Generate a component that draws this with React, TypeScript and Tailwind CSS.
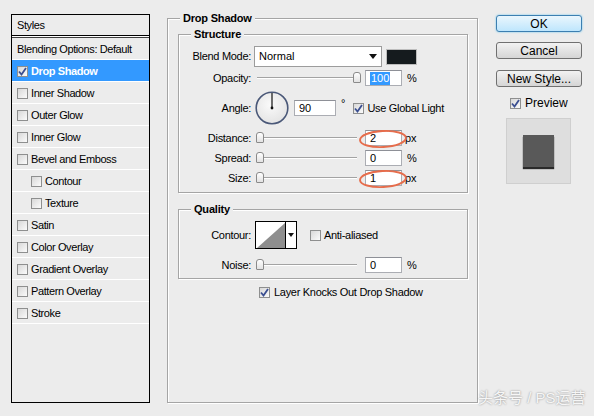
import React from 'react'

function Check({ checked = false }: { checked?: boolean }) {
  return (
    <span className="flex h-[11px] w-[11px] shrink-0 items-center justify-center border border-[#8e8f8f] bg-gradient-to-br from-[#d8d8d8] to-[#fbfbfb]">
      {checked && (
        <svg width="9" height="9" viewBox="0 0 9 9">
          <path d="M1 4.5 L3.5 7.5 L8 1" fill="none" stroke="#3b4f91" strokeWidth="1.8" />
        </svg>
      )}
    </span>
  )
}

function Slider({ thumb }: { thumb: string }) {
  return (
    <div className="relative ml-[3px] h-[12px] w-[104px] shrink-0">
      <div className="absolute left-[3px] right-[1px] top-[5px] h-[2px] border-t border-[#a3a3a3] border-b border-b-white" />
      <div
        className={`absolute top-0 h-[11px] w-[8px] rounded-t-[3px] rounded-b-[1px] border border-[#8a8a8a] bg-gradient-to-b from-white to-[#e2e2e2] ${thumb}`}
      />
    </div>
  )
}

function Field({ value, w = 'w-[37px]', ml = 'ml-[7px]', selected = false }: { value: string; w?: string; ml?: string; selected?: boolean }) {
  return (
    <div className={`flex h-[16px] shrink-0 items-center border border-[#abadb3] border-t-[#8e9097] bg-white pl-[4px] text-[11px] leading-none ${w} ${ml}`}>
      {selected ? <span className="bg-[#3399ff] px-[1px] py-[1px] text-white">{value}</span> : value}
    </div>
  )
}

function Label({ text }: { text: string }) {
  return <div className="w-[72px] shrink-0 text-right text-[11px] tracking-[-0.3px]">{text}</div>
}

function Group({ title, className, children }: { title: string; className: string; children: React.ReactNode }) {
  return (
    <div className={`relative shrink-0 border border-[#a5a5a5] shadow-[1px_1px_0_#fff,inset_1px_1px_0_#fff] ${className}`}>
      <div className="absolute left-[12px] top-[-8px] bg-[#ececec] px-[3px] text-[11px] font-bold leading-[14px] tracking-[-0.2px]">
        {title}
      </div>
      {children}
    </div>
  )
}

const styleRows: { label: string; indent?: boolean; active?: boolean; checked?: boolean; plain?: boolean }[] = [
  { label: 'Blending Options: Default', plain: true },
  { label: 'Drop Shadow', active: true, checked: true },
  { label: 'Inner Shadow' },
  { label: 'Outer Glow' },
  { label: 'Inner Glow' },
  { label: 'Bevel and Emboss' },
  { label: 'Contour', indent: true },
  { label: 'Texture', indent: true },
  { label: 'Satin' },
  { label: 'Color Overlay' },
  { label: 'Gradient Overlay' },
  { label: 'Pattern Overlay' },
  { label: 'Stroke' },
]

function Ellipse({ top }: { top: string }) {
  return (
    <svg className={`pointer-events-none absolute left-[179px] ${top}`} width="50" height="20" viewBox="0 0 50 20">
      <ellipse cx="25" cy="10" rx="23" ry="8" fill="none" stroke="#e66d4c" strokeWidth="1.9" transform="rotate(-3 25 10)" />
      <path d="M4 7 Q10 2 30 2" fill="none" stroke="#e66d4c" strokeWidth="1.2" />
    </svg>
  )
}

export default function App() {
  return (
    <div className="relative flex h-[416px] w-[594px] overflow-hidden bg-[#ececec] font-['Liberation_Sans','Noto_Sans_CJK_SC',sans-serif] text-black">
      {/* styles list */}
      <div className="ml-[11px] mt-[14px] flex h-[389px] w-[139px] shrink-0 flex-col border border-black">
        <div className="flex h-[21px] items-center border-b border-black pl-[5px] text-[11px] tracking-[-0.4px]">Styles</div>
        <div className="h-[1px] bg-white" />
        <div className="h-[1px] bg-[#404040]" />
        {styleRows.map((r) => (
          <div
            key={r.label}
            className={`flex h-[22px] items-center border-b border-white pt-[1px] text-[11px] tracking-[-0.4px] ${r.indent ? 'pl-[19px]' : 'pl-[5px]'} ${
              r.active ? 'bg-[#3399ff] font-bold text-white' : ''
            }`}
          >
            {!r.plain && <Check checked={r.checked} />}
            <span className={r.plain ? '' : 'ml-[3px]'}>{r.label}</span>
          </div>
        ))}
      </div>

      {/* settings */}
      <Group title="Drop Shadow" className="ml-[17px] mt-[18px] h-[385px] w-[311px]">
        <div className="flex flex-col pl-[10px] pt-[15px]">
          <Group title="Structure" className="h-[159px] w-[290px]">
            <div className="flex flex-col pt-[11px]">
              <div className="flex h-[21px] items-center">
                <Label text="Blend Mode:" />
                <div className="ml-[3px] flex h-[21px] w-[128px] items-center justify-between border border-[#9c9c9c] bg-white pl-[4px] pr-[4px] text-[11px]">
                  <span>Normal</span>
                  <svg width="8" height="5" viewBox="0 0 8 5">
                    <path d="M0 0 H8 L4 5 Z" fill="#111" />
                  </svg>
                </div>
                <div className="ml-[4px] h-[16px] w-[31px] border border-[#bdbdbd] bg-[#151b1e]" />
              </div>
              <div className="mt-[3px] flex h-[16px] items-center">
                <Label text="Opacity:" />
                <Slider thumb="left-[99px]" />
                <Field value="100" selected />
                <span className="ml-[5px] text-[11px]">%</span>
              </div>
              <div className="mt-[5px] flex h-[34px] items-center">
                <Label text="Angle:" />
                <svg className="ml-[4px] shrink-0" width="34" height="34" viewBox="0 0 34 34">
                  <defs>
                    <radialGradient id="dial" cx="0.45" cy="0.4" r="0.6">
                      <stop offset="0" stopColor="#fafafa" />
                      <stop offset="1" stopColor="#e4e4e4" />
                    </radialGradient>
                  </defs>
                  <circle cx="17" cy="17" r="15.8" fill="url(#dial)" stroke="#4a5878" strokeWidth="1.6" />
                  <line x1="17" y1="17" x2="17" y2="2" stroke="#111" strokeWidth="1.2" />
                  <circle cx="17" cy="17" r="1.4" fill="#111" />
                </svg>
                <Field value="90" w="w-[42px]" ml="ml-[5px]" />
                <span className="ml-[5px] self-start pt-[4px] text-[11px]">°</span>
                <div className="ml-[8px] flex items-center">
                  <Check checked />
                  <span className="ml-[3px] text-[11px] tracking-[-0.3px]">Use Global Light</span>
                </div>
              </div>
              <div className="mt-[5px] flex h-[16px] items-center">
                <Label text="Distance:" />
                <Slider thumb="left-[2px]" />
                <Field value="2" />
                <span className="ml-[3px] text-[11px]">px</span>
              </div>
              <div className="mt-[4px] flex h-[16px] items-center">
                <Label text="Spread:" />
                <Slider thumb="left-[2px]" />
                <Field value="0" />
                <span className="ml-[5px] text-[11px]">%</span>
              </div>
              <div className="mt-[4px] flex h-[16px] items-center">
                <Label text="Size:" />
                <Slider thumb="left-[2px]" />
                <Field value="1" />
                <span className="ml-[3px] text-[11px]">px</span>
              </div>
            </div>
            <Ellipse top="top-[94px]" />
            <Ellipse top="top-[134px]" />
          </Group>

          <Group title="Quality" className="mt-[16px] h-[70px] w-[290px]">
            <div className="flex flex-col pt-[11px]">
              <div className="flex h-[28px] items-center">
                <Label text="Contour:" />
                <div className="ml-[4px] flex h-[28px] w-[42px] border border-black bg-white">
                  <svg width="29" height="26" viewBox="0 0 29 26">
                    <polygon points="1,26 29,1 29,26" fill="#8e8e8e" />
                  </svg>
                  <div className="flex flex-1 items-center justify-center border-l border-black">
                    <svg width="6" height="4" viewBox="0 0 6 4">
                      <path d="M0 0 H6 L3 4 Z" fill="#111" />
                    </svg>
                  </div>
                </div>
                <div className="ml-[13px] flex items-center">
                  <Check />
                  <span className="ml-[3px] text-[11px] tracking-[-0.3px]">Anti-aliased</span>
                </div>
              </div>
              <div className="mt-[8px] flex h-[16px] items-center">
                <Label text="Noise:" />
                <Slider thumb="left-[2px]" />
                <Field value="0" />
                <span className="ml-[5px] text-[11px]">%</span>
              </div>
            </div>
          </Group>

          <div className="ml-[81px] mt-[5px] flex items-center">
            <Check checked />
            <span className="ml-[4px] text-[11px] tracking-[-0.3px]">Layer Knocks Out Drop Shadow</span>
          </div>
        </div>
      </Group>

      {/* buttons */}
      <div className="ml-[18px] mt-[15px] flex w-[86px] shrink-0 flex-col items-center">
        <button className="h-[17px] w-[86px] rounded-[3px] border border-[#3c7fb1] bg-gradient-to-b from-[#eaf6fd] to-[#bee6fd] text-[12px] leading-none shadow-[0_0_2px_#5bc0f0]">
          OK
        </button>
        <button className="mt-[10px] h-[17px] w-[86px] rounded-[3px] border border-[#707070] bg-gradient-to-b from-[#f2f2f2] to-[#d5d5d5] text-[12px] leading-none">
          Cancel
        </button>
        <button className="mt-[11px] h-[17px] w-[86px] rounded-[3px] border border-[#707070] bg-gradient-to-b from-[#f2f2f2] to-[#d5d5d5] text-[12px] leading-none">
          New Style...
        </button>
        <div className="mt-[7px] flex items-center self-start pl-[14px]">
          <Check checked />
          <span className="ml-[4px] text-[12px]">Preview</span>
        </div>
        <div className="ml-[10px] mt-[6px] flex h-[66px] w-[65px] items-center justify-center self-start border border-[#cfcfcf] bg-[#dedede]">
          <div className="h-[32px] w-[31px] bg-[#595959] shadow-[0_2px_1px_#2a2a2a]" />
        </div>
      </div>

      <div className="absolute left-[478px] top-[390px] text-[15px] leading-[16px] text-[#f6f6f6] [text-shadow:0_0_2px_rgba(0,0,0,0.45)]">
        头条号 / PS运营
      </div>
    </div>
  )
}
